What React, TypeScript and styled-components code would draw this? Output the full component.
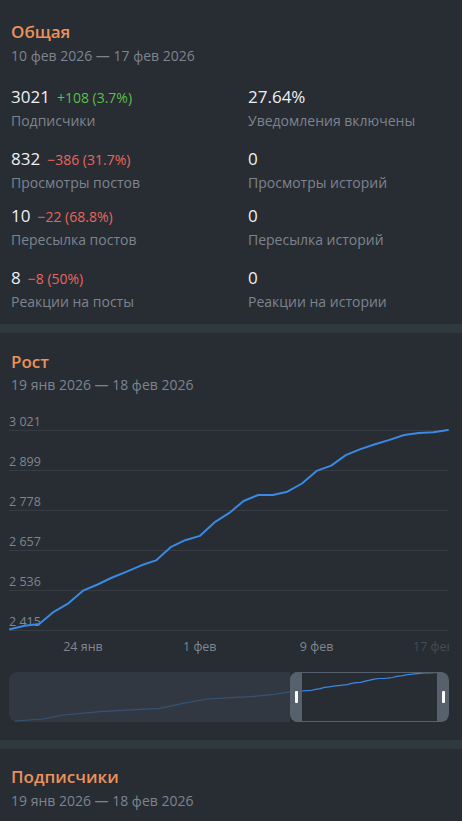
import React from "react";
import styled, { createGlobalStyle } from "styled-components";

const GlobalStyle = createGlobalStyle`
  html, body {
    margin: 0;
    padding: 0;
    background: #282c33;
  }
  body {
    font-family: "Open Sans", "Noto Sans", sans-serif;
    -webkit-font-smoothing: antialiased;
  }
`;

const Page = styled.div`
  width: 462px;
  background: #282c33;
  overflow: hidden;
`;

const Section = styled.section<{ $pt: number; $pb: number }>`
  padding: ${(p) => p.$pt}px 0 ${(p) => p.$pb}px 0;
`;

const Header = styled.div`
  padding: 0 11px;
`;

const Title = styled.div`
  font-size: 17px;
  font-weight: 600;
  line-height: 20px;
  color: #e8925c;
`;

const DateRange = styled.div<{ $mt: number }>`
  margin-top: ${(p) => p.$mt}px;
  font-size: 14px;
  line-height: 20px;
  color: #7c858f;
`;

const Divider = styled.div`
  height: 9px;
  background: #303840;
`;

const StatRow = styled.div<{ $mt: number }>`
  display: grid;
  grid-template-columns: 237px 1fr;
  padding-left: 11px;
  margin-top: ${(p) => p.$mt}px;
`;

const Stat = styled.div`
  display: flex;
  flex-direction: column;
`;

const ValueLine = styled.div`
  display: flex;
  align-items: baseline;
  height: 22px;
  line-height: 22px;
`;

const Value = styled.span`
  font-size: 17px;
  color: #eef0f2;
`;

const Delta = styled.span<{ $up: boolean }>`
  margin-left: 7px;
  font-size: 14px;
  color: ${(p) => (p.$up ? "#5cbf4a" : "#e8665c")};
`;

const Label = styled.div`
  margin-top: 3px;
  font-size: 14px;
  line-height: 20px;
  color: #7c858f;
`;

const ChartSvg = styled.svg`
  display: block;
  margin-top: 5px;
  font-family: "Open Sans", "Noto Sans", sans-serif;
`;

const Minimap = styled.div`
  position: relative;
  margin: 12px 13px 0 9px;
  height: 50px;
  border-radius: 8px;
  overflow: hidden;
`;

const MiniSvg = styled.svg`
  display: block;
`;

const Shade = styled.div`
  position: absolute;
  left: 0;
  top: 0;
  bottom: 0;
  background: rgba(52, 61, 70, 0.72);
  border-radius: 7px 0 0 7px;
`;

const Window = styled.div`
  position: absolute;
  top: 0;
  bottom: 0;
  right: 0;
  display: flex;
  justify-content: space-between;
  box-sizing: border-box;
  border-top: 1px solid #57616d;
  border-bottom: 1px solid #57616d;
  border-radius: 8px;
`;

const Handle = styled.div<{ $side: "left" | "right" }>`
  width: 12px;
  margin: -1px 0;
  background: #57616d;
  border-radius: ${(p) => (p.$side === "left" ? "8px 0 0 8px" : "0 8px 8px 0")};
  display: flex;
  align-items: center;
  justify-content: center;
`;

const Tick = styled.div`
  width: 3px;
  height: 12px;
  border-radius: 1px;
  background: #ffffff;
`;

const stats = [
  { mt: 20, left: { v: "3021", d: "+108 (3.7%)", up: true, l: "Подписчики" }, right: { v: "27.64%", l: "Уведомления включены" } },
  { mt: 17, left: { v: "832", d: "−386 (31.7%)", up: false, l: "Просмотры постов" }, right: { v: "0", l: "Просмотры историй" } },
  { mt: 12, left: { v: "10", d: "−22 (68.8%)", up: false, l: "Пересылка постов" }, right: { v: "0", l: "Пересылка историй" } },
  { mt: 17, left: { v: "8", d: "−8 (50%)", up: false, l: "Реакции на посты" }, right: { v: "0", l: "Реакции на истории" } },
];

const growth = [
  2417, 2428, 2433, 2470, 2496, 2534, 2553, 2574, 2592, 2611, 2626, 2666, 2687, 2700, 2741, 2769,
  2806, 2824, 2824, 2834, 2859, 2897, 2913, 2945, 2963, 2978, 2991, 3006, 3012, 3014, 3021,
];

const Y_MIN = 2415;
const Y_MAX = 3021;
const X0 = 10;
const STEP = 14.6;
const gridY = [230, 190, 150, 110, 70, 30];

const fmt = (n: number) => {
  const s = String(n);
  return s.length > 3 ? s.slice(0, s.length - 3) + " " + s.slice(-3) : s;
};

const xLabels = [
  { i: 5, t: "24 янв", faded: false },
  { i: 13, t: "1 фев", faded: false },
  { i: 21, t: "9 фев", faded: false },
  { i: 29, t: "17 фев", faded: true },
];

const GrowthChart: React.FC = () => {
  const pts = growth
    .map((v, i) => `${(X0 + i * STEP).toFixed(1)},${(230 - ((v - Y_MIN) / (Y_MAX - Y_MIN)) * 200).toFixed(1)}`)
    .join(" ");
  return (
    <ChartSvg width={462} height={260} viewBox="0 0 462 260">
      <defs>
        <clipPath id="xclip">
          <rect x={0} y={235} width={449} height={25} />
        </clipPath>
      </defs>
      {gridY.map((y, k) => (
        <g key={y}>
          <line x1={9} x2={448} y1={y + 0.5} y2={y + 0.5} stroke="#373c44" strokeWidth={1} />
          <text x={9} y={y - 4} fontSize={12.5} fill="#7f8791">
            {fmt(Math.floor(Y_MIN + ((Y_MAX - Y_MIN) / 5) * k))}
          </text>
        </g>
      ))}
      <polyline points={pts} fill="none" stroke="#3a89e4" strokeWidth={2} strokeLinejoin="round" strokeLinecap="round" />
      <g clipPath="url(#xclip)">
        {xLabels.map((l) => (
          <text
            key={l.t}
            x={X0 + l.i * STEP}
            y={251}
            fontSize={12.5}
            textAnchor="middle"
            fill="#7f8791"
            opacity={l.faded ? 0.35 : 1}
          >
            {l.t}
          </text>
        ))}
      </g>
    </ChartSvg>
  );
};

const miniHistory: [number, number][] = [
  [6, 49], [34, 47], [54, 43], [91, 39.7], [131, 37.3], [151, 36.3], [174, 31.3], [198, 27],
  [222, 25.7], [242, 24.7], [265, 22.3], [282, 19.7],
];

const MiniChart: React.FC = () => {
  const win = growth.map((v, i) => [293 + i * 4.52, 19 - ((v - 2417) / 604) * 18.5] as [number, number]);
  const all = [...miniHistory, ...win].map(([x, y]) => `${x.toFixed(1)},${y.toFixed(1)}`).join(" ");
  return (
    <Minimap>
      <MiniSvg width={440} height={50} viewBox="0 0 440 50">
        <polyline points={all} fill="none" stroke="#3a89e4" strokeWidth={1.2} strokeLinejoin="round" />
      </MiniSvg>
      <Shade style={{ width: 281 }} />
      <Window style={{ width: 159 }}>
        <Handle $side="left">
          <Tick />
        </Handle>
        <Handle $side="right">
          <Tick />
        </Handle>
      </Window>
    </Minimap>
  );
};

export default function App() {
  return (
    <Page>
      <GlobalStyle />
      <Section $pt={22} $pb={12}>
        <Header>
          <Title>Общая</Title>
          <DateRange $mt={4}>10 фев 2026 — 17 фев 2026</DateRange>
        </Header>
        {stats.map((row, idx) => (
          <StatRow key={idx} $mt={row.mt}>
            <Stat>
              <ValueLine>
                <Value>{row.left.v}</Value>
                <Delta $up={row.left.up}>{row.left.d}</Delta>
              </ValueLine>
              <Label>{row.left.l}</Label>
            </Stat>
            <Stat>
              <ValueLine>
                <Value>{row.right.v}</Value>
              </ValueLine>
              <Label>{row.right.l}</Label>
            </Stat>
          </StatRow>
        ))}
      </Section>
      <Divider />
      <Section $pt={19} $pb={18}>
        <Header>
          <Title>Рост</Title>
          <DateRange $mt={3}>19 янв 2026 — 18 фев 2026</DateRange>
        </Header>
        <GrowthChart />
        <MiniChart />
      </Section>
      <Divider />
      <Section $pt={18} $pb={40}>
        <Header>
          <Title>Подписчики</Title>
          <DateRange $mt={4}>19 янв 2026 — 18 фев 2026</DateRange>
        </Header>
      </Section>
    </Page>
  );
}
